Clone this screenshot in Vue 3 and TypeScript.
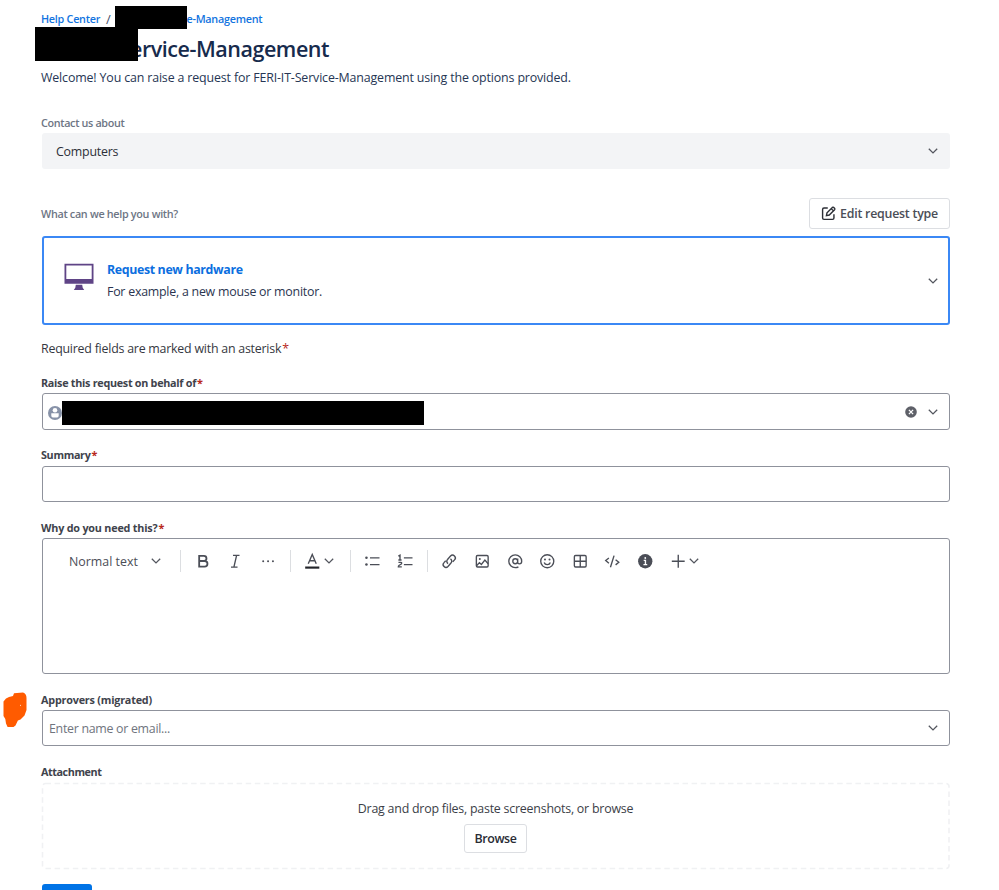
<script setup lang="ts">
interface Tool {
  name: string
  wide?: boolean
}

const toolGroups: Tool[][] = [
  [{ name: 'bold' }, { name: 'italic' }, { name: 'more' }],
  [{ name: 'color', wide: true }],
  [{ name: 'bullets' }, { name: 'numbers' }],
  [
    { name: 'link' },
    { name: 'image' },
    { name: 'mention' },
    { name: 'emoji' },
    { name: 'table' },
    { name: 'code' },
    { name: 'info' },
    { name: 'plus', wide: true },
  ],
]
</script>

<template>
  <main class="page">
    <nav class="crumbs">
      <a class="crumb home">Help Center</a>
      <span class="slash">/</span>
      <a class="crumb portal">e-Management</a>
      <span class="redact redact-crumb"></span>
    </nav>
    <h1 class="title">ervice-Management<span class="redact redact-title"></span></h1>
    <p class="intro">Welcome! You can raise a request for FERI-IT-Service-Management using the options provided.</p>

    <div class="hint contact">Contact us about</div>
    <div class="select filled">
      <span>Computers</span>
      <svg class="chev" viewBox="0 0 10 6"><path d="M.8.8 5 4.9 9.2.8" /></svg>
    </div>

    <div class="type-head">
      <span class="hint what">What can we help you with?</span>
      <button class="btn edit">
        <svg class="edit-icon" viewBox="0 0 16 16">
          <path d="M7.2 2.2H3.2Q1.7 2.2 1.7 3.7v9.1q0 1.5 1.5 1.5h9.1q1.5 0 1.5-1.5V8.9" />
          <path d="M5.8 10.3 6.4 7.2 12.1 1.5q.7-.6 1.4 0l1 1q.6.7 0 1.4L8.8 9.6ZM10.9 2.8l2.4 2.4" />
        </svg>
        <span>Edit request type</span>
      </button>
    </div>

    <section class="card">
      <svg class="monitor" viewBox="0 0 30 28">
        <path fill-rule="evenodd" d="M.5.8h29v20H.5ZM2.3 2.6v13.5h25.4V2.6ZM11.8 21.8h6.4l.5 3 1.5 2.2H9.8l1.5-2.2Z" />
      </svg>
      <div class="card-text">
        <strong>Request new hardware</strong>
        <span>For example, a new mouse or monitor.</span>
      </div>
      <svg class="chev" viewBox="0 0 10 6"><path d="M.8.8 5 4.9 9.2.8" /></svg>
    </section>

    <p class="required">Required fields are marked with an asterisk<i class="star">*</i></p>

    <div class="label raise">Raise this request on behalf of<i class="star">*</i></div>
    <div class="field user">
      <svg class="avatar" viewBox="0 0 14 14">
        <circle cx="7" cy="7" r="7" fill="#8792a8" />
        <circle cx="7" cy="4.2" r="2.3" fill="#fff" />
        <path d="M3.3 7.3h7.4v2.5q0 1.6-1.6 1.6H4.9q-1.6 0-1.6-1.6Z" fill="#fff" />
      </svg>
      <span class="redact redact-user"></span>
      <svg class="clear" viewBox="0 0 12 12">
        <circle cx="6" cy="6" r="5.8" fill="#5e6068" />
        <path d="m3.9 3.9 4.2 4.2m0-4.200L3.900 8.100" stroke="#fff" stroke-width="1.3" />
      </svg>
      <svg class="chev" viewBox="0 0 10 6"><path d="M.8.8 5 4.9 9.2.8" /></svg>
    </div>

    <div class="label summary">Summary<i class="star">*</i></div>
    <div class="field summary-input"></div>

    <div class="label why">Why do you need this?<i class="star">*</i></div>
    <div class="editor">
      <div class="toolbar">
        <div class="style-pick">
          <span>Normal text</span>
          <svg class="chev" viewBox="0 0 10 6"><path d="M.8.8 5 4.9 9.2.8" /></svg>
        </div>
        <template v-for="(group, g) in toolGroups" :key="g">
          <span class="sep"></span>
          <span v-for="tool in group" :key="tool.name" class="tool" :class="{ wide: tool.wide }">
            <svg class="icon" viewBox="0 0 16 16">
              <path v-if="tool.name === 'bold'" stroke-width="2" d="M3.5 2h5.2a2.8 2.8 0 0 1 0 5.7H3.5ZM3.5 7.7h6a3.1 3.1 0 0 1 0 6.3h-6Z" />
              <path v-else-if="tool.name === 'italic'" d="M5.5 1.5h7.2M3.3 14.5h7.2M9.5 1.5 6.5 14.5" />
              <g v-else-if="tool.name === 'more'" class="solid">
                <circle cx="2.4" cy="8" r="1.1" /><circle cx="7.8" cy="8" r="1.1" /><circle cx="13.2" cy="8" r="1.1" />
              </g>
              <g v-else-if="tool.name === 'color'">
                <path d="M3.6 10.8 8 .5l4.4 10.3M5.1 7.4h5.8" /><path stroke="#22242a" stroke-width="2.4" d="M.2 15h15.6" />
              </g>
              <g v-else-if="tool.name === 'bullets'">
                <path d="M5.5 4.2H16M5.5 11.7H16" /><g class="solid"><circle cx="1.6" cy="4.2" r="1.4" /><circle cx="1.6" cy="11.7" r="1.4" /></g>
              </g>
              <g v-else-if="tool.name === 'numbers'">
                <path d="M6.5 4.2H16M6.5 11.7H16M.4 2.3 2.2 1.2v5.4M.4 6.6h3.5M.5 9.2h2.6q1 0 .9 1 0 .7-.8 1.1L1 12.7q-.6.4-.6 1.5H4.2" />
              </g>
              <path v-else-if="tool.name === 'link'" d="M6.7 10.6A3 3 0 0 1 6.1 6L9.4 2.2a3 3 0 0 1 4.400 4.300L11.900 8.600M9.300 5.400A3 3 0 0 1 9.900 10L6.600 13.800a3 3 0 0 1-4.400-4.300L4.100 7.400" />
              <g v-else-if="tool.name === 'image'">
                <rect x="1.5" y="1.7" width="13" height="12.6" rx="1.3" /><path d="m2 12.7 2.9-3.2 2.1 2 3.9-4.8 3.6 4" /><circle cx="5.3" cy="5.4" r="1.1" class="solid" />
              </g>
              <path v-else-if="tool.name === 'mention'" d="M10.7 8a2.7 2.7 0 1 1-5.4 0 2.7 2.7 0 0 1 5.4 0Zm0-3v4.2q0 1.7 1.8 1.7 2.6 0 2.6-2.9A7.1 7.1 0 1 0 8 15.1q2 0 3.5-.9" />
              <g v-else-if="tool.name === 'emoji'">
                <circle cx="8" cy="8" r="7.2" /><path d="M4.6 9.3q.8 2.4 3.4 2.4t3.4-2.4" /><g class="solid"><circle cx="5.5" cy="6" r="1.1" /><circle cx="10.5" cy="6" r="1.1" /></g>
              </g>
              <g v-else-if="tool.name === 'table'">
                <rect x="1.5" y="1.7" width="13" height="12.6" rx="1.3" /><path d="M8 1.7v12.6M1.5 8h13" />
              </g>
              <path v-else-if="tool.name === 'code'" d="M4.3 4.5.8 7.2l3.5 2.9M11.7 6.4l3.5 2.8-3.5 2.8M10 1.8 6 14.7" />
              <g v-else-if="tool.name === 'info'">
                <circle cx="8" cy="8" r="7.9" class="solid" /><path stroke="#fff" d="M6.3 7h1.9v4.8M6 11.8h4.2" /><circle cx="8" cy="4.4" r="1" fill="#fff" stroke="none" />
              </g>
              <path v-else d="M8 .9v14.2M.9 8h14.2" />
            </svg>
            <svg v-if="tool.wide" class="chev" viewBox="0 0 10 6"><path d="M.8.8 5 4.9 9.2.8" /></svg>
          </span>
        </template>
      </div>
    </div>

    <div class="label approvers">Approvers (migrated)
      <svg class="scribble" viewBox="0 0 24 36">
        <path d="M11 1.2 20 .6Q23.5 2 23.5 6v12l-2 5.5-4 4-2.6 1-2.4 5-2 1.5H4.6L3 31.5 2.3 27 .5 24V9.5L3 6.5 6 5l4-1Z" />
        <circle cx="17.5" cy="13.3" r=".5" />
      </svg>
    </div>
    <div class="field search">
      <span>Enter name or email...</span>
      <svg class="chev" viewBox="0 0 10 6"><path d="M.8.8 5 4.9 9.2.8" /></svg>
    </div>

    <div class="label attachment">Attachment</div>
    <div class="drop">
      <svg class="dashes"><rect x="1.5" y="1.5" width="906.5" height="85" rx="3" /></svg>
      <span class="drop-text">Drag and drop files, paste screenshots, or browse</span>
      <button class="btn browse">Browse</button>
    </div>
    <div class="send"></div>
  </main>
</template>

<style>
html,
body {
  overflow: hidden;
  background: #fff;
}
</style>

<style scoped>
.page {
  box-sizing: border-box;
  display: flex;
  flex-direction: column;
  width: 999px;
  height: 890px;
  padding: 10px 49px 0 41px;
  overflow: hidden;
  font: 400 12.4px/18px "Open Sans", "Noto Sans", sans-serif;
  letter-spacing: -0.23px;
  color: #2b3550;
}
.page > * {
  flex-shrink: 0;
}
.crumbs {
  position: relative;
  display: flex;
  height: 18px;
  font-size: 10.8px;
  font-weight: 600;
  letter-spacing: -0.26px;
  white-space: nowrap;
}
.crumb {
  color: #1274e0;
}
.home {
  width: 65px;
}
.slash {
  width: 80.5px;
  font-size: 13px;
  font-weight: 400;
  color: #44516c;
}
.redact {
  position: absolute;
  background: #000;
}
.redact-crumb {
  left: 74px;
  top: -4px;
  width: 72px;
  height: 23px;
}
.title {
  position: relative;
  height: 32px;
  margin: 5px 0 0;
  padding-left: 89px;
  font-size: 21.5px;
  font-weight: 600;
  line-height: 32px;
  letter-spacing: -0.46px;
  color: #172b4d;
}
.redact-title {
  left: -6px;
  top: -6px;
  width: 103px;
  height: 34px;
}
.intro {
  margin: 4px 0 0;
  letter-spacing: -0.144px;
  color: #263654;
}
.hint {
  font-size: 10.8px;
  font-weight: 600;
  letter-spacing: -0.34px;
  color: #6d7584;
}
.contact {
  margin-top: 27px;
}
.select {
  display: flex;
  box-sizing: border-box;
  align-items: center;
  justify-content: space-between;
  height: 36px;
  margin-top: 1px;
  margin-left: 1px;
  padding: 0 12px 0 14px;
  border-radius: 3px;
  background: #f3f4f6;
  color: #2c2f38;
}
.select span {
  padding-top: 1px;
}
.chev {
  width: 10px;
  height: 6px;
  fill: none;
  stroke: #53565e;
  stroke-width: 1.3;
}
.type-head {
  display: flex;
  align-items: center;
  justify-content: space-between;
  height: 31px;
  margin-top: 29px;
}
.what {
  letter-spacing: -0.31px;
}
.btn {
  box-sizing: border-box;
  display: flex;
  align-items: center;
  justify-content: center;
  padding: 0;
  border: 1px solid #dcdee2;
  border-radius: 3px;
  background: #fff;
  font: 600 12.4px/18px "Open Sans", "Noto Sans", sans-serif;
}
.edit {
  gap: 4px;
  width: 141px;
  height: 31px;
  letter-spacing: -0.24px;
  color: #4b4e57;
}
.edit-icon {
  width: 15px;
  height: 15px;
  fill: none;
  stroke: #2c2f36;
  stroke-width: 1.5;
}
.card {
  display: flex;
  box-sizing: border-box;
  align-items: center;
  height: 89px;
  margin: 7px 0 0 1px;
  padding: 0 10px 0 20px;
  border: 2px solid #3b88f5;
  border-radius: 3px;
}
.monitor {
  width: 30px;
  height: 28px;
  margin: -8px 13px 0 0;
  fill: #5f4486;
}
.card-text {
  display: flex;
  flex: 1;
  flex-direction: column;
  gap: 4px;
  letter-spacing: -0.24px;
}
.card-text strong {
  font-weight: 700;
  letter-spacing: -0.37px;
  color: #0c6fe0;
}
.required {
  margin: 15px 0 0;
  color: #353841;
}
.star {
  margin-left: 1px;
  font-style: normal;
  color: #b8281c;
}
.label {
  position: relative;
  height: 18px;
  font-size: 10.8px;
  font-weight: 700;
  letter-spacing: -0.28px;
  color: #40434c;
}
.raise {
  margin-top: 16px;
}
.summary {
  margin-top: 16px;
  letter-spacing: -0.33px;
}
.why {
  margin-top: 17px;
}
.why,
.approvers {
  letter-spacing: -0.2px;
}
.field {
  position: relative;
  display: flex;
  box-sizing: border-box;
  align-items: center;
  height: 36px;
  margin-top: 1px;
  margin-left: 1px;
  padding: 0 11px 0 6px;
  border: 1px solid #8f929c;
  border-radius: 3px;
}
.user {
  height: 37px;
}
.summary-input {
  margin-top: 2px;
}
.avatar {
  width: 14px;
  height: 14px;
  margin-top: 3px;
  margin-left: -1px;
}
.redact-user {
  left: 19px;
  top: 7px;
  width: 362px;
  height: 24px;
}
.clear {
  width: 12px;
  height: 12px;
  margin-left: auto;
  margin-right: 11px;
}
.editor {
  box-sizing: border-box;
  height: 136px;
  margin-top: 1px;
  margin-left: 1px;
  border: 1px solid #8f929c;
  border-radius: 3px;
}
.toolbar {
  display: flex;
  align-items: center;
  height: 44px;
}
.style-pick {
  display: flex;
  box-sizing: border-box;
  align-items: center;
  justify-content: space-between;
  width: 131.7px;
  padding: 0 13.5px 0 26px;
  font-weight: 500;
  letter-spacing: 0;
  color: #4b4e57;
}
.style-pick span {
  padding-top: 1px;
}
.sep {
  width: 1px;
  height: 22px;
  margin: 0 5.4px;
  background: #dcdee1;
}
.tool {
  display: flex;
  align-items: center;
  justify-content: center;
  width: 32.6px;
}
.wide {
  gap: 4px;
  width: 48.6px;
  margin-left: -1px;
  margin-right: 1px;
}
.icon {
  width: 14.5px;
  height: 14.5px;
  fill: none;
  stroke: #4b4e57;
  stroke-width: 1.5;
  overflow: visible;
}
.icon .solid {
  fill: #4b4e57;
  stroke: none;
}
.approvers {
  margin-top: 17px;
}
.scribble {
  position: absolute;
  left: -38px;
  top: 1px;
  width: 24px;
  height: 36px;
  fill: #ff5b00;
}
.scribble circle {
  fill: #fff;
}
.search {
  justify-content: space-between;
  letter-spacing: -0.29px;
  color: #70747e;
}
.search span {
  padding-top: 1px;
}
.attachment {
  margin-top: 17px;
  letter-spacing: -0.43px;
}
.drop {
  position: relative;
  display: flex;
  flex-direction: column;
  align-items: center;
  height: 87px;
  margin-top: 1px;
  letter-spacing: -0.22px;
  color: #3b3e47;
}
.dashes {
  position: absolute;
  width: 909px;
  height: 88px;
  fill: none;
  stroke: #f0f1f3;
  stroke-width: 1.6;
  stroke-dasharray: 5.5 3.6;
}
.drop-text {
  margin-top: 18px;
}
.browse {
  position: relative;
  width: 63px;
  height: 29px;
  margin-top: 6px;
  letter-spacing: -0.4px;
  color: #292c34;
}
.send {
  width: 50px;
  height: 30px;
  margin-top: 15px;
  margin-left: 1px;
  border-radius: 3px;
  background: #0073e6;
}
</style>
